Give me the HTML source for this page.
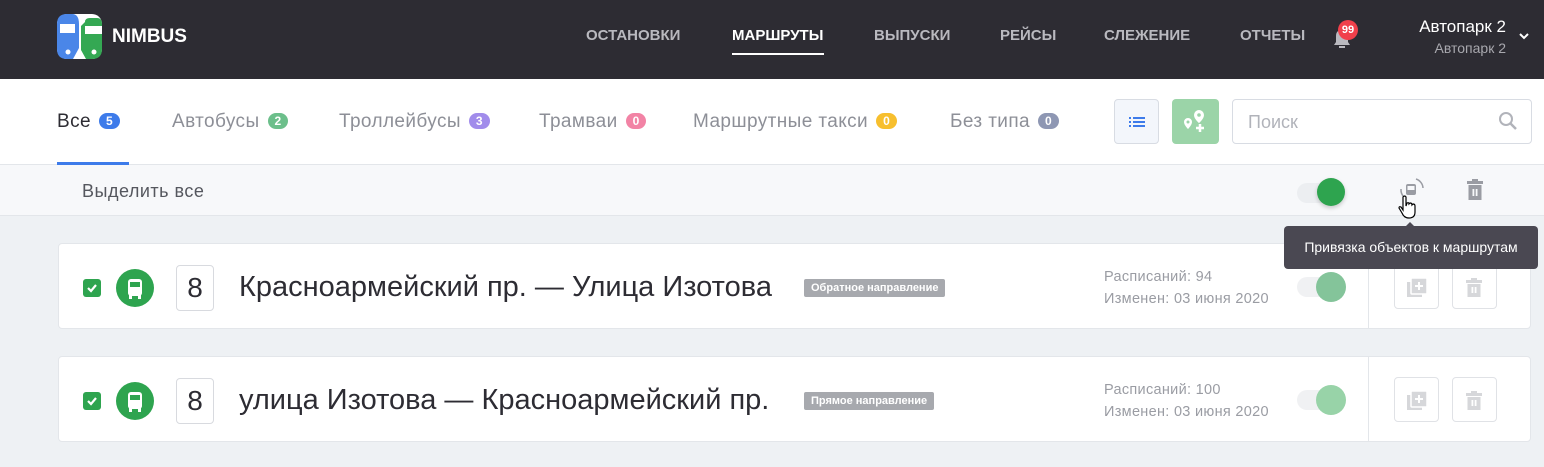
<!DOCTYPE html><html><head><meta charset="utf-8"><style>
*{box-sizing:border-box;margin:0;padding:0}
body{width:1544px;height:467px;overflow:hidden;background:#eef1f4;font-family:"Liberation Sans",sans-serif;position:relative}
.a{position:absolute}
.hdr{left:0;top:0;width:1544px;height:79px;background:#2d2c33}
.nav{top:27px;font-size:15px;font-weight:bold;color:#b9b9bf}
.tabs{left:0;top:79px;width:1544px;height:86px;background:#fff;border-bottom:1px solid #e3e6ea}
.tab{top:111px;font-size:19px;letter-spacing:0.4px;color:#8d8f97}
.b{display:inline-block;font-size:12px;letter-spacing:0;color:#fff;border-radius:8px;padding:1px 7px;margin-left:8px;vertical-align:2px;font-weight:bold}
.sel{left:0;top:165px;width:1544px;height:51px;background:#f7f8fa;border-bottom:1px solid #e3e6ea}
.card{left:58px;width:1473px;height:86px;background:#fff;border:1px solid #e3e6ea;border-radius:4px}
.chk{left:24px;top:35px;width:18px;height:18px;background:#2ea44f;border-radius:3px}
.ic{left:57px;top:25px;width:38px;height:38px;border-radius:50%;background:#2ea44f}
.num{left:117px;top:21px;width:38px;height:46px;border:1px solid #d8dadf;border-radius:4px;font-size:28px;color:#2d2c33;text-align:center;line-height:44px}
.ttl{left:180px;top:27px;font-size:29px;color:#2d2c33}
.tag{top:35px;background:#a7a9ae;color:#fff;font-size:11px;font-weight:bold;padding:3px 7px;border-radius:2px}
.meta{left:1045px;top:22px;font-size:14.5px;letter-spacing:0.3px;color:#9a9ca3;line-height:22px}
.tr{left:1238px;top:33px;width:42px;height:20px;border-radius:10px;background:#f0f1f3}
.kn{left:1257px;top:28px;width:30px;height:30px;border-radius:50%}
.vl{left:1309px;top:0;width:1px;height:84px;background:#e3e6ea}
.bt{top:33px;width:45px;height:45px;border:1px solid #e0e2e6;border-radius:4px}
</style></head><body>
<div class="a hdr"></div>
<svg class="a" style="left:57px;top:14px" width="45" height="45" viewBox="0 0 45 45"><rect width="45" height="45" rx="10" fill="#fff"/><path d="M0 10 Q0 0 10 0 H15 Q22 0 22 10 V34 L16 45 H10 Q0 45 0 35Z" fill="#4a86e8"/><rect x="3" y="10" width="15" height="9" fill="#fff"/><circle cx="11" cy="38" r="2.5" fill="#fff"/><path d="M28 8 Q28 4 33 4 H40 Q45 4 45 10 V35 Q45 45 35 45 H29 L24 36 V12Z" fill="#34a853"/><rect x="28" y="12" width="17" height="8" fill="#fff"/><circle cx="37" cy="38" r="2.5" fill="#fff"/></svg>
<div class="a" style="left:112px;top:26px;color:#fff;font-weight:bold;font-size:19px">NIMBUS</div>
<div class="a nav" style="left:586px">ОСТАНОВКИ</div>
<div class="a nav" style="left:732px;color:#fff">МАРШРУТЫ</div>
<div class="a" style="left:732px;top:53px;width:92px;height:2px;background:#fff"></div>
<div class="a nav" style="left:874px">ВЫПУСКИ</div>
<div class="a nav" style="left:1000px">РЕЙСЫ</div>
<div class="a nav" style="left:1104px">СЛЕЖЕНИЕ</div>
<div class="a nav" style="left:1240px">ОТЧЕТЫ</div>
<svg class="a" style="left:1330px;top:26px" width="24" height="24" viewBox="0 0 24 24"><path d="M4 19 H20 L18 16 V10 Q18 4 12 4 Q6 4 6 10 V16Z" fill="#b9b9bf"/><path d="M9 21 H15" stroke="#b9b9bf" stroke-width="2"/></svg>
<div class="a" style="left:1338px;top:20px;width:20px;height:20px;border-radius:50%;background:#f1404b;color:#fff;font-size:11px;font-weight:bold;text-align:center;line-height:20px">99</div>
<div class="a" style="left:1380px;top:17px;width:126px;text-align:right;color:#fff;font-size:17px">Автопарк 2</div>
<div class="a" style="left:1380px;top:40px;width:126px;text-align:right;color:#a8a8ae;font-size:14px">Автопарк 2</div>
<svg class="a" style="left:1518px;top:31px" width="12" height="10"><path d="M2 3 L6 7 L10 3" stroke="#fff" stroke-width="2" fill="none"/></svg>
<div class="a tabs"></div>
<div class="a tab" style="left:57px;color:#2d2c33">Все<span class="b" style="background:#3d7bea">5</span></div>
<div class="a" style="left:57px;top:162px;width:72px;height:3px;background:#3d7bea"></div>
<div class="a tab" style="left:172px">Автобусы<span class="b" style="background:#6cbf8b">2</span></div>
<div class="a tab" style="left:339px">Троллейбусы<span class="b" style="background:#a18ceb">3</span></div>
<div class="a tab" style="left:539px">Трамваи<span class="b" style="background:#f283a5">0</span></div>
<div class="a tab" style="left:693px">Маршрутные такси<span class="b" style="background:#f7bf2e">0</span></div>
<div class="a tab" style="left:950px">Без типа<span class="b" style="background:#8e97b3">0</span></div>
<div class="a" style="left:1114px;top:99px;width:45px;height:45px;border:1px solid #d8dce3;border-radius:4px;background:#f3f6fb"></div>
<svg class="a" style="left:1129px;top:116px" width="16" height="12"><g fill="#3d7bea"><rect x="0" y="1" width="2" height="2"/><rect x="4" y="1" width="12" height="2"/><rect x="0" y="5" width="2" height="2"/><rect x="4" y="5" width="12" height="2"/><rect x="0" y="9" width="2" height="2"/><rect x="4" y="9" width="12" height="2"/></g></svg>
<div class="a" style="left:1172px;top:99px;width:47px;height:45px;border-radius:4px;background:#9bd4a8"></div>
<svg class="a" style="left:1182px;top:108px" width="26" height="26" viewBox="0 0 26 26"><path d="M17 2 a5 5 0 0 1 5 5 c0 4 -5 8 -5 8 s-5 -4 -5 -8 a5 5 0 0 1 5 -5z M6 10 a4 4 0 0 1 4 4 c0 3 -4 7 -4 7 s-4 -4 -4 -7 a4 4 0 0 1 4 -4z" fill="#fff"/><circle cx="17" cy="7" r="1.8" fill="#9bd4a8"/><circle cx="6" cy="14" r="1.5" fill="#9bd4a8"/><path d="M14 20 H22 M18 16 V24" stroke="#fff" stroke-width="2.5"/></svg>
<div class="a" style="left:1232px;top:99px;width:300px;height:45px;border:1px solid #d8dce3;border-radius:4px"></div>
<div class="a" style="left:1248px;top:112px;font-size:18px;color:#b1b3ba">Поиск</div>
<svg class="a" style="left:1498px;top:111px" width="20" height="20"><circle cx="8" cy="8" r="6" stroke="#b1b3ba" stroke-width="2" fill="none"/><path d="M12.5 12.5 L18 18" stroke="#b1b3ba" stroke-width="2.5"/></svg>
<div class="a sel"></div>
<div class="a" style="left:82px;top:181px;font-size:18px;letter-spacing:0.5px;color:#55575e">Выделить все</div>
<div class="a" style="left:1297px;top:183px;width:40px;height:20px;border-radius:10px;background:#eceef1"></div>
<div class="a" style="left:1317px;top:178px;width:28px;height:28px;border-radius:50%;background:#2ea44f;box-shadow:0 2px 4px rgba(0,0,0,.2)"></div>
<svg class="a" style="left:1398px;top:176px" width="28" height="28" viewBox="0 0 28 28"><path d="M18 3 A10 10 0 0 1 25 12" stroke="#9a9ca3" stroke-width="1.5" fill="none"/><path d="M3 13 A10 10 0 0 0 6 21" stroke="#9a9ca3" stroke-width="1.5" fill="none"/><rect x="8" y="8" width="10" height="11" rx="2" fill="#9a9ca3"/><rect x="9.5" y="10" width="7" height="4" fill="#f7f8fa"/></svg>
<svg class="a" style="left:1397px;top:195px" width="22" height="26" viewBox="0 0 22 26"><path d="M6 2 Q8 0 9 2 V11 L10 8 Q12 7 12 9 L13 8 Q15 8 15 10 L16 9 Q18 9 18 11 V17 Q18 23 12 23 Q7 23 5 18 L2 13 Q2 11 4 12 L6 15Z" fill="#fff" stroke="#000" stroke-width="1.2"/></svg>
<svg class="a" style="left:1466px;top:179px" width="18" height="22"><rect x="1" y="2" width="16" height="3" fill="#9a9ca3"/><rect x="6" y="0" width="6" height="3" fill="#9a9ca3"/><rect x="2.5" y="6" width="13" height="15" fill="#9a9ca3"/><rect x="6.5" y="10" width="1.8" height="7" fill="#f7f8fa"/><rect x="9.7" y="10" width="1.8" height="7" fill="#f7f8fa"/></svg>

<div class="a card" style="top:243px">
 <div class="a chk"><svg width="18" height="18"><path d="M5 9 L8 12 L13 6" stroke="#fff" stroke-width="2.2" fill="none"/></svg></div>
 <div class="a ic"><svg width="38" height="38"><rect x="12" y="10" width="14" height="17" rx="3" fill="#fff"/><rect x="14" y="13" width="10" height="5" fill="#2ea44f"/><rect x="13" y="26" width="3" height="4" fill="#fff"/><rect x="22" y="26" width="3" height="4" fill="#fff"/></svg></div>
 <div class="a num">8</div>
 <div class="a ttl">Красноармейский пр. — Улица Изотова</div>
 <div class="a tag" style="left:745px">Обратное направление</div>
 <div class="a meta">Расписаний: 94<br>Изменен: 03 июня 2020</div>
 <div class="a tr"></div><div class="a kn" style="background:#84c49a"></div>
 <div class="a vl"></div>
 <div class="a bt" style="left:1335px;top:20px"></div><div class="a bt" style="left:1393px;top:20px"></div>
</div>
<div class="a card" style="top:356px">
 <div class="a chk"><svg width="18" height="18"><path d="M5 9 L8 12 L13 6" stroke="#fff" stroke-width="2.2" fill="none"/></svg></div>
 <div class="a ic"><svg width="38" height="38"><rect x="12" y="10" width="14" height="17" rx="3" fill="#fff"/><rect x="14" y="13" width="10" height="5" fill="#2ea44f"/><rect x="13" y="26" width="3" height="4" fill="#fff"/><rect x="22" y="26" width="3" height="4" fill="#fff"/></svg></div>
 <div class="a num">8</div>
 <div class="a ttl">улица Изотова — Красноармейский пр.</div>
 <div class="a tag" style="left:745px">Прямое направление</div>
 <div class="a meta">Расписаний: 100<br>Изменен: 03 июня 2020</div>
 <div class="a tr"></div><div class="a kn" style="background:#98d3a8"></div>
 <div class="a vl"></div>
 <div class="a bt" style="left:1335px;top:20px"></div><div class="a bt" style="left:1393px;top:20px"></div>
</div>
<svg class="a" style="left:1406px;top:277px" width="22" height="22"><rect x="1" y="5" width="15" height="15" fill="#d6d7da"/><rect x="5" y="1" width="16" height="16" rx="1" fill="#d6d7da" stroke="#fff" stroke-width="1.5"/><path d="M13 5 V13 M9 9 H17" stroke="#fff" stroke-width="2"/></svg>
<svg class="a" style="left:1466px;top:278px" width="16" height="20"><rect x="0" y="2" width="16" height="3" fill="#d6d7da"/><rect x="5" y="0" width="6" height="3" fill="#d6d7da"/><rect x="1.5" y="6" width="13" height="13" fill="#d6d7da"/><rect x="5.5" y="9" width="1.8" height="6" fill="#fff"/><rect x="8.7" y="9" width="1.8" height="6" fill="#fff"/></svg>
<svg class="a" style="left:1406px;top:390px" width="22" height="22"><rect x="1" y="5" width="15" height="15" fill="#d6d7da"/><rect x="5" y="1" width="16" height="16" rx="1" fill="#d6d7da" stroke="#fff" stroke-width="1.5"/><path d="M13 5 V13 M9 9 H17" stroke="#fff" stroke-width="2"/></svg>
<svg class="a" style="left:1466px;top:391px" width="16" height="20"><rect x="0" y="2" width="16" height="3" fill="#d6d7da"/><rect x="5" y="0" width="6" height="3" fill="#d6d7da"/><rect x="1.5" y="6" width="13" height="13" fill="#d6d7da"/><rect x="5.5" y="9" width="1.8" height="6" fill="#fff"/><rect x="8.7" y="9" width="1.8" height="6" fill="#fff"/></svg>
<div class="a" style="left:1404px;top:222px;width:0;height:0;border-left:6px solid transparent;border-right:6px solid transparent;border-bottom:6px solid #4a4852"></div>
<div class="a" style="left:1284px;top:226px;width:254px;height:43px;background:#4a4852;border-radius:4px;color:#fff;font-size:14px;line-height:43px;text-align:center">Привязка объектов к маршрутам</div>
</body></html>
